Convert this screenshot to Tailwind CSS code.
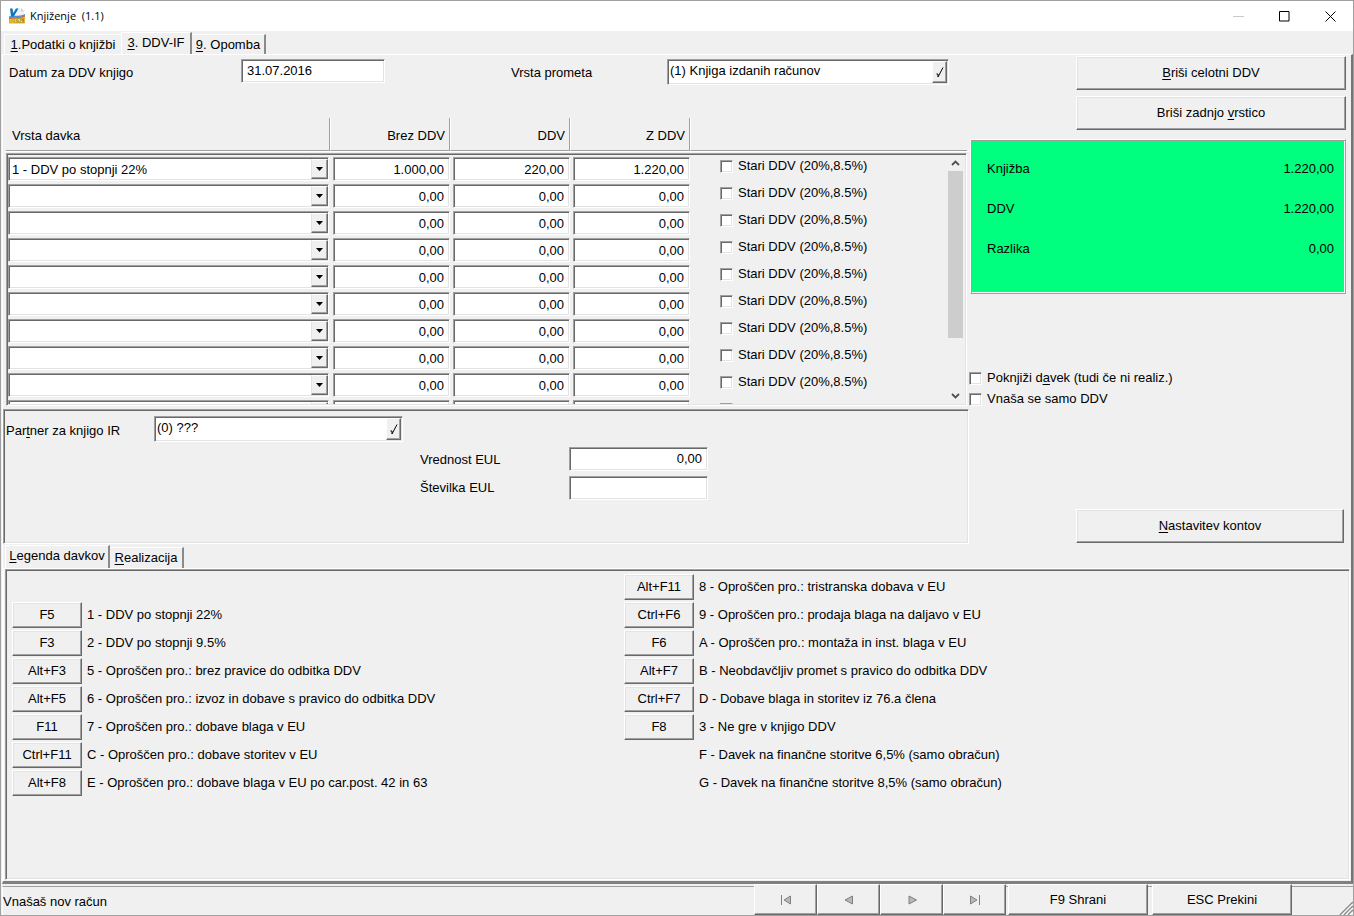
<!DOCTYPE html>
<html lang="sl">
<head>
<meta charset="utf-8">
<meta name="viewport" content="width=device-width, initial-scale=1">
<title>Knjiženje (1.1)</title>
<script src="https://cdn.jsdelivr.net/npm/@tailwindcss/browser@4"></script>
</head>
<body class="bg-white font-['Liberation_Sans',Arial,sans-serif] text-[13px] leading-4 text-black">
<div class="flex min-h-screen flex-col border border-[#a0a0a0] bg-[#f0f0f0]">

  <!-- Title bar -->
  <header class="flex h-[30px] items-center bg-white pl-2">
    <svg class="size-4" viewBox="0 0 16 16" aria-hidden="true">
      <path d="M6 0h6l3 3.500V10H3z" fill="#f1f3f5"/>
      <path d="M12 0v3.500h3z" fill="#c9d0d6"/>
      <path d="M0 9c5 0 9 1 16-1v7.500H0z" fill="#e0b52a"/>
      <path d="M5 10.500h10v4H5z" fill="#a8922c"/>
      <path d="M0 9.500c5-.5 9 .5 16-2.500v1.500c-6 2.500-11 1.500-16 2.500z" fill="#d0603a"/>
      <path d="M0 8.500c5-1.500 9 .5 16-2.500v1.500c-6 2.500-11 1-16 2.500z" fill="#4f8fdc"/>
      <path d="M1 .5h2.600l.6 4.500L7 .5h2.500L4.800 8.500H2z" fill="#1276bc"/>
      <path d="M7.500 11.500H6v2h1.500M9 13.500v-2h1.500v2M12 11.500v2h1.500" fill="none" stroke="#f4ecc0" stroke-width=".8"/>
    </svg>
    <h1 class="ml-[5px] grow font-['Open_Sans','Segoe_UI',sans-serif] text-[11px]">Knjiženje&nbsp; (1.1)</h1>
    <button type="button" aria-label="Minimiraj" class="flex h-[30px] w-[46px] items-center justify-center">
      <svg class="size-[11px]" viewBox="0 0 11 11"><path d="M0 5.500h11" stroke="#c8c8c8"/></svg>
    </button>
    <button type="button" aria-label="Maksimiraj" class="flex h-[30px] w-[46px] items-center justify-center">
      <svg class="size-[11px]" viewBox="0 0 11 11"><path d="M.5.5h9.500v9.500H.5z" fill="none" stroke="#000"/></svg>
    </button>
    <button type="button" aria-label="Zapri" class="flex h-[30px] w-[46px] items-center justify-center">
      <svg class="size-[11px]" viewBox="0 0 11 11"><path d="M.5.5l10 10M10.500.5l-10 10" stroke="#000"/></svg>
    </button>
  </header>

  <!-- Main tabs -->
  <nav role="tablist" class="flex h-[23px] items-end pl-[3px]">
    <button type="button" role="tab" aria-selected="false" class="h-5 w-[117px] border-t border-l border-white"><span class="underline underline-offset-2">1</span>.Podatki o knjižbi</button>
    <button type="button" role="tab" aria-selected="true" class="h-[22px] w-[71px] border-t border-r-2 border-l border-t-white border-r-[#8a8a8a] border-l-white pb-[2px]"><span class="underline underline-offset-2">3</span>. DDV-IF</button>
    <button type="button" role="tab" aria-selected="false" class="h-5 w-[74px] border-t border-r-2 border-t-white border-r-[#8a8a8a]"><span class="underline underline-offset-2">9</span>. Opomba</button>
  </nav>

  <!-- Tab page -->
  <main class="ml-px flex grow flex-col border-t border-r-2 border-b-[3px] border-l border-t-white border-r-[#747474] border-b-[#808080] border-l-white">
    <div class="flex">

      <div class="min-w-0 grow">
        <form class="flex h-[63px] items-start pt-1 pl-[6px]">
          <label for="datum" class="w-[232px] shrink-0 pt-[6px]">Datum za DDV knjigo</label>
          <input id="datum" value="31.07.2016" class="h-6 w-[144px] border border-t-[#a0a0a0] border-r-white border-b-white border-l-[#a0a0a0] bg-white px-[5px] pb-[2px] shadow-[inset_1px_1px_0_#696969,inset_-1px_-1px_0_#e3e3e3]">
          <label for="promet" class="ml-[126px] w-[156px] shrink-0 pt-[6px]">Vrsta prometa</label>
          <div class="flex h-[26px] w-[282px] items-stretch border border-t-[#a0a0a0] border-r-white border-b-white border-l-[#a0a0a0] bg-white p-px shadow-[inset_1px_1px_0_#696969,inset_-1px_-1px_0_#e3e3e3]">
            <input id="promet" value="(1) Knjiga izdanih računov" class="min-w-0 grow bg-transparent pb-[2px] pl-px outline-none">
            <button type="button" aria-label="Izberi vrsto prometa" class="flex w-[15px] items-center justify-center border border-t-white border-r-[#696969] border-b-[#696969] border-l-white bg-[#f0f0f0] shadow-[inset_-1px_-1px_0_#a0a0a0]">
              <svg class="h-[11px] w-[8px] shrink-0" viewBox="0 0 8 11"><path d="M.5 7h1.500v3L7 .5" fill="none" stroke="#000"/></svg>
            </button>
          </div>
        </form>

        <!-- Column captions -->
        <div class="ml-[3px] flex h-[34px] border-b border-white pr-[2px]">
          <div class="w-[324px] border-r border-b border-[#a0a0a0] pt-[10px] pl-[6px]">Vrsta davka</div>
          <div class="w-[120px] border-r border-b border-l border-[#a0a0a0] border-l-white pt-[10px] pr-1 text-right">Brez DDV</div>
          <div class="w-[120px] border-r border-b border-l border-[#a0a0a0] border-l-white pt-[10px] pr-1 text-right">DDV</div>
          <div class="w-[120px] border-r border-b border-l border-[#a0a0a0] border-l-white pt-[10px] pr-1 text-right">Z DDV</div>
          <div class="grow border-b border-l border-[#a0a0a0] border-l-white"></div>
        </div>

        <!-- Tax rows -->
        <div class="mt-px mr-[2px] ml-[3px] flex h-[253px] overflow-hidden border border-t-[#a0a0a0] border-r-white border-b-white border-l-[#a0a0a0] p-px shadow-[inset_1px_1px_0_#696969,inset_-1px_-1px_0_#e3e3e3]">
          <div class="h-[249px] min-w-0 grow overflow-hidden pt-[2px]">
            <table class="border-collapse" aria-label="Vrstice DDV">
              <tbody id="vrstice"></tbody>
            </table>
          </div>
          <div class="flex h-[249px] w-[17px] flex-col bg-[#f0f0f0] pr-[2px]" aria-hidden="true">
            <div class="flex h-4 items-center justify-center"><svg class="h-[6px] w-[9px]" viewBox="0 0 9 6"><path d="M1 5l3.500-3.500L8 5" fill="none" stroke="#505050" stroke-width="1.800"/></svg></div>
            <div class="h-[167px] bg-[#cdcdcd]"></div>
            <div class="grow"></div>
            <div class="flex h-4 items-center justify-center"><svg class="h-[6px] w-[9px]" viewBox="0 0 9 6"><path d="M1 1l3.500 3.500L8 1" fill="none" stroke="#505050" stroke-width="1.800"/></svg></div>
          </div>
        </div>

        <!-- Partner panel -->
        <section class="mt-[3px] h-[135px] border border-t-[#a0a0a0] border-r-white border-b-white border-l-[#a0a0a0] px-[2px] pt-[6px] shadow-[inset_1px_1px_0_#696969,inset_-1px_-1px_0_#e3e3e3]">
          <div class="flex">
            <label for="partner" class="w-[148px] pt-[7px]">Par<span class="underline underline-offset-2">t</span>ner za knjigo IR</label>
            <div class="flex h-[26px] w-[249px] items-stretch border border-t-[#a0a0a0] border-r-white border-b-white border-l-[#a0a0a0] bg-white p-px shadow-[inset_1px_1px_0_#696969,inset_-1px_-1px_0_#e3e3e3]">
              <input id="partner" value="(0) ???" class="min-w-0 grow bg-transparent pb-[2px] pl-px outline-none">
              <button type="button" aria-label="Izberi partnerja" class="flex w-[15px] items-center justify-center border border-t-white border-r-[#696969] border-b-[#696969] border-l-white bg-[#f0f0f0] shadow-[inset_-1px_-1px_0_#a0a0a0]">
                <svg class="h-[11px] w-[8px] shrink-0" viewBox="0 0 8 11"><path d="M.5 7h1.500v3L7 .5" fill="none" stroke="#000"/></svg>
              </button>
            </div>
          </div>
          <div class="mt-[5px] ml-[414px] grid grid-cols-[149px_139px] gap-y-[5px]">
            <label for="vrednost" class="pt-[5px]">Vrednost EUL</label>
            <input id="vrednost" value="0,00" class="h-6 w-full border border-t-[#a0a0a0] border-r-white border-b-white border-l-[#a0a0a0] bg-white px-[5px] pb-[2px] text-right shadow-[inset_1px_1px_0_#696969,inset_-1px_-1px_0_#e3e3e3]">
            <label for="stevilka" class="pt-1">Številka EUL</label>
            <input id="stevilka" value="" class="h-6 w-full border border-t-[#a0a0a0] border-r-white border-b-white border-l-[#a0a0a0] bg-white px-[5px] pb-[2px] shadow-[inset_1px_1px_0_#696969,inset_-1px_-1px_0_#e3e3e3]">
          </div>
        </section>
      </div>

      <!-- Right column -->
      <aside class="flex w-[382px] shrink-0 flex-col pt-px pr-[5px]">
        <div class="ml-[107px] flex flex-col gap-[6px]">
          <button type="button" class="h-[34px] border border-t-white border-r-[#696969] border-b-[#696969] border-l-white shadow-[inset_-1px_-1px_0_#a0a0a0,inset_1px_1px_0_#e3e3e3]"><span class="underline underline-offset-2">B</span>riši celotni DDV</button>
          <button type="button" class="h-[34px] border border-t-white border-r-[#696969] border-b-[#696969] border-l-white shadow-[inset_-1px_-1px_0_#a0a0a0,inset_1px_1px_0_#e3e3e3]">Briši zadnjo <span class="underline underline-offset-2">v</span>rstico</button>
        </div>
        <dl class="mt-[9px] ml-px flex h-[155px] flex-col gap-6 border border-t-white border-r-[#a0a0a0] border-b-[#a0a0a0] border-l-white bg-[#00ff7f] px-4 pt-[21px] pr-[11px] shadow-[inset_1px_1px_0_#a0a0a0,inset_-1px_-1px_0_#fff]">
          <div class="flex justify-between"><dt>Knjižba</dt><dd>1.220,00</dd></div>
          <div class="flex justify-between"><dt>DDV</dt><dd>1.220,00</dd></div>
          <div class="flex justify-between"><dt>Razlika</dt><dd>0,00</dd></div>
        </dl>
        <div class="mt-[76px] flex flex-col gap-[5px]">
          <label class="flex items-center gap-[5px]"><input type="checkbox" class="size-[13px] appearance-none border border-t-[#a0a0a0] border-r-white border-b-white border-l-[#a0a0a0] bg-white shadow-[inset_1px_1px_0_#696969,inset_-1px_-1px_0_#e3e3e3]"><span>Poknjiži d<span class="underline underline-offset-2">a</span>vek (tudi če ni realiz.)</span></label>
          <label class="flex items-center gap-[5px]"><input type="checkbox" class="size-[13px] appearance-none border border-t-[#a0a0a0] border-r-white border-b-white border-l-[#a0a0a0] bg-white shadow-[inset_1px_1px_0_#696969,inset_-1px_-1px_0_#e3e3e3]">Vnaša se samo DDV</label>
        </div>
        <button type="button" class="mt-[102px] mr-[2px] ml-[107px] h-[34px] border border-t-white border-r-[#696969] border-b-[#696969] border-l-white shadow-[inset_-1px_-1px_0_#a0a0a0,inset_1px_1px_0_#e3e3e3]"><span class="underline underline-offset-2">N</span>astavitev kontov</button>
      </aside>
    </div>

    <!-- Legend tabs -->
    <nav role="tablist" class="flex h-[24px] items-end pl-[2px]">
      <button type="button" role="tab" aria-selected="true" class="h-[23px] w-[105px] border-t border-r-2 border-l border-t-white border-r-[#8a8a8a] border-l-white pb-[2px]"><span class="underline underline-offset-2">L</span>egenda davkov</button>
      <button type="button" role="tab" aria-selected="false" class="h-[21px] w-[74px] border-t border-r-2 border-t-white border-r-[#8a8a8a]"><span class="underline underline-offset-2">R</span>ealizacija</button>
    </nav>
    <div class="flex grow border-t border-l border-white pr-px pb-px">
      <section class="ml-px grid grow grid-cols-[612px_1fr] content-start border border-t-[#a0a0a0] border-r-white border-b-white border-l-[#a0a0a0] px-[6px] pt-1 shadow-[inset_1px_1px_0_#696969,inset_-1px_-1px_0_#e3e3e3]">
        <ul id="levo" class="flex flex-col gap-[2px] pt-7"></ul>
        <ul id="desno" class="flex flex-col gap-[2px]"></ul>
      </section>
    </div>
  </main>

  <!-- Status bar -->
  <footer class="flex h-[31px] items-stretch pl-px">
    <p class="mt-[2px] grow border-t border-l border-t-[#a0a0a0] border-l-white pt-[7px]" role="status">Vnašaš nov račun</p>
    <div class="flex">
      <button type="button" aria-label="Prvi" disabled class="flex w-[63px] items-center justify-center border border-t-white border-r-[#696969] border-b-[#696969] border-l-white shadow-[inset_-1px_-1px_0_#a0a0a0]"><svg class="h-[10px] w-[12px]" viewBox="0 0 12 10"><path d="M1 0h1v10H1z" fill="#808080"/><path d="M10.500 1v8L4 5z" fill="#b8b8b8" stroke="#808080"/></svg></button>
      <button type="button" aria-label="Prejšnji" disabled class="flex w-[63px] items-center justify-center border border-t-white border-r-[#696969] border-b-[#696969] border-l-white shadow-[inset_-1px_-1px_0_#a0a0a0]"><svg class="h-[10px] w-[12px]" viewBox="0 0 12 10"><path d="M9.500 1v8L2 5z" fill="#b8b8b8" stroke="#808080"/></svg></button>
      <button type="button" aria-label="Naslednji" disabled class="flex w-[63px] items-center justify-center border border-t-white border-r-[#696969] border-b-[#696969] border-l-white shadow-[inset_-1px_-1px_0_#a0a0a0]"><svg class="h-[10px] w-[12px]" viewBox="0 0 12 10"><path d="M3 1v8l7.500-4z" fill="#b8b8b8" stroke="#808080"/></svg></button>
      <button type="button" aria-label="Zadnji" disabled class="flex w-[63px] items-center justify-center border border-t-white border-r-[#696969] border-b-[#696969] border-l-white shadow-[inset_-1px_-1px_0_#a0a0a0]"><svg class="h-[10px] w-[12px]" viewBox="0 0 12 10"><path d="M10 0h1v10h-1z" fill="#808080"/><path d="M1.500 1v8L8 5z" fill="#b8b8b8" stroke="#808080"/></svg></button>
    </div>
    <div class="mt-[2px] w-[2px] border-t border-[#a0a0a0]"></div>
    <button type="button" class="w-[140px] border border-t-white border-r-[#696969] border-b-[#696969] border-l-white shadow-[inset_-1px_-1px_0_#a0a0a0]">F9 Shrani</button>
    <div class="mt-[2px] w-[4px] border-t border-[#a0a0a0]"></div>
    <button type="button" class="w-[140px] border border-t-white border-r-[#696969] border-b-[#696969] border-l-white shadow-[inset_-1px_-1px_0_#a0a0a0]">ESC Prekini</button>
    <div class="mt-[2px] flex w-[61px] items-end justify-end border-t border-[#a0a0a0]">
      <svg class="size-[14px]" viewBox="0 0 14 14" aria-hidden="true"><path d="M1 14L14 1M5 14L14 5M9 14L14 9" stroke="#8c8c8c" stroke-width="1.600"/><path d="M2.500 14L14 2.500M6.500 14L14 6.500M10.500 14L14 10.500" stroke="#fff"/></svg>
    </div>
  </footer>
</div>

<script>
  const field = 'block h-6 w-full border border-t-[#a0a0a0] border-r-white border-b-white border-l-[#a0a0a0] bg-white px-[5px] text-right shadow-[inset_1px_1px_0_#696969,inset_-1px_-1px_0_#e3e3e3]';
  const rows = [['1 - DDV po stopnji 22%', '1.000,00', '220,00', '1.220,00']];
  while (rows.length < 10) rows.push(['', '0,00', '0,00', '0,00']);
  document.getElementById('vrstice').innerHTML = rows.map(([tax, net, vat, gross], i) => `
    <tr class="h-[27px] align-top">
      <td class="w-[325px] p-0 pr-1">
        <div class="relative">
          <select aria-label="Vrsta davka ${i + 1}" class="block h-6 w-full appearance-none border border-t-[#a0a0a0] border-r-white border-b-white border-l-[#a0a0a0] bg-white pt-[2px] pl-[3px] shadow-[inset_1px_1px_0_#696969,inset_-1px_-1px_0_#e3e3e3]"><option>${tax}</option></select>
          <span aria-hidden="true" class="pointer-events-none absolute top-[2px] right-px bottom-[2px] flex w-[17px] items-center justify-center border border-t-white border-r-[#696969] border-b-[#696969] border-l-[#e3e3e3] bg-[#f0f0f0] shadow-[inset_-1px_-1px_0_#a0a0a0]"><svg class="h-1 w-[7px]" viewBox="0 0 7 4"><path d="M0 0h7L3.500 4z"/></svg></span>
        </div>
      </td>
      <td class="w-[120px] p-0 pr-[3px]"><input aria-label="Brez DDV ${i + 1}" value="${net}" class="${field}"></td>
      <td class="w-[120px] p-0 pr-[3px]"><input aria-label="DDV ${i + 1}" value="${vat}" class="${field}"></td>
      <td class="w-[120px] p-0 pr-[3px]"><input aria-label="Z DDV ${i + 1}" value="${gross}" class="${field}"></td>
      <td class="p-0 pl-[27px]"><label class="flex items-center gap-[5px] pt-px whitespace-nowrap"><input type="checkbox" class="size-[13px] appearance-none border border-t-[#a0a0a0] border-r-white border-b-white border-l-[#a0a0a0] bg-white shadow-[inset_1px_1px_0_#696969,inset_-1px_-1px_0_#e3e3e3]">Stari DDV (20%,8.5%)</label></td>
    </tr>`).join('');

  const legend = {
    levo: [
      ['F5', '1 - DDV po stopnji 22%'],
      ['F3', '2 - DDV po stopnji 9.5%'],
      ['Alt+F3', '5 - Oproščen pro.: brez pravice do odbitka DDV'],
      ['Alt+F5', '6 - Oproščen pro.: izvoz in dobave s pravico do odbitka DDV'],
      ['F11', '7 - Oproščen pro.: dobave blaga v EU'],
      ['Ctrl+F11', 'C - Oproščen pro.: dobave storitev v EU'],
      ['Alt+F8', 'E - Oproščen pro.: dobave blaga v EU po car.post. 42 in 63'],
    ],
    desno: [
      ['Alt+F11', '8 - Oproščen pro.: tristranska dobava v EU'],
      ['Ctrl+F6', '9 - Oproščen pro.: prodaja blaga na daljavo v EU'],
      ['F6', 'A - Oproščen pro.: montaža in inst. blaga v EU'],
      ['Alt+F7', 'B - Neobdavčljiv promet s pravico do odbitka DDV'],
      ['Ctrl+F7', 'D - Dobave blaga in storitev iz 76.a člena'],
      ['F8', '3 - Ne gre v knjigo DDV'],
      ['', 'F - Davek na finančne storitve 6,5% (samo obračun)'],
      ['', 'G - Davek na finančne storitve 8,5% (samo obračun)'],
    ],
  };
  for (const [id, items] of Object.entries(legend)) {
    document.getElementById(id).innerHTML = items.map(([key, text]) => `
      <li class="flex h-[26px] items-center gap-[5px]">
        ${key
          ? `<button type="button" class="h-[26px] w-[70px] shrink-0 border border-t-white border-r-[#696969] border-b-[#696969] border-l-white shadow-[inset_-1px_-1px_0_#a0a0a0,inset_1px_1px_0_#e3e3e3]">${key}</button>`
          : '<span class="w-[70px] shrink-0"></span>'}
        <span>${text}</span>
      </li>`).join('');
  }
</script>
</body>
</html>
